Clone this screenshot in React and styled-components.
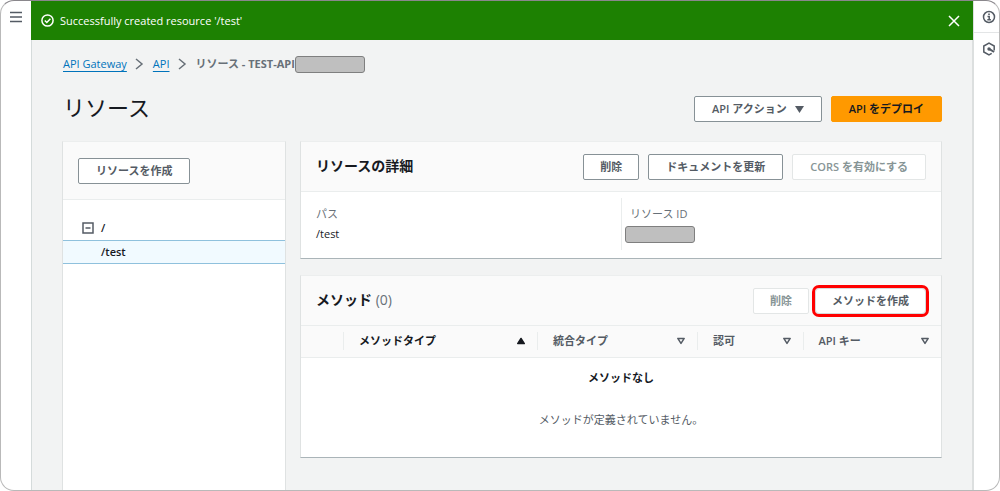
import styled, { createGlobalStyle } from "styled-components";

const GlobalStyle = createGlobalStyle`
  * {
    box-sizing: border-box;
  }

  body {
    margin: 0;
    background: #ffffff;
    color: #16191f;
    font-family: "Open Sans", "Noto Sans CJK JP", sans-serif;
    font-size: 11px;
    line-height: 20px;
  }

  h1, h2, p, ul, ol, dl, dd {
    margin: 0;
    padding: 0;
  }

  ul, ol {
    list-style: none;
  }

  svg {
    display: block;
    flex: none;
  }
`;

const Frame = styled.div`
  display: flex;
  min-height: 100vh;
  border: 1px solid #b9b9b9;
  border-top-color: #8a878c;
  border-radius: 14px;
  overflow: hidden;
`;

const Rail = styled.nav`
  display: flex;
  flex-direction: column;
  flex: none;
  width: ${(props) => props.$width};
`;

const RailButton = styled.button`
  display: flex;
  align-items: center;
  justify-content: center;
  height: 32px;
  padding: 0 0 0 ${(props) => props.$inset || "0"};
  border: 0;
  border-bottom: 1px solid ${(props) => (props.$line ? "#e3e5e6" : "transparent")};
  background: none;
  color: #545b64;
`;

const Main = styled.main`
  display: flex;
  flex-direction: column;
  flex: 1;
  min-width: 0;
  background: #f2f3f3;
  border-left: 1px solid #d5dbdb;
  border-right: 2px solid #dcdfdf;
`;

const Banner = styled.div`
  display: flex;
  align-items: center;
  gap: 6px;
  height: 39px;
  margin: 0 -1px;
  padding: 0 13px 0 10px;
  background: #1d8102;
  color: #ffffff;
  font-weight: 500;
`;

const BannerText = styled.p`
  flex: 1;
`;

const PlainButton = styled.button`
  display: flex;
  padding: 0;
  border: 0;
  background: none;
  color: inherit;
`;

const Content = styled.div`
  display: flex;
  flex-direction: column;
  flex: 1;
  padding: 14px 30px 0;
`;

const Breadcrumbs = styled.ol`
  display: flex;
  align-items: center;
  height: 20px;
  padding-left: 1px;
`;

const Crumb = styled.li`
  display: flex;
  align-items: center;
  color: #687078;
  font-weight: ${(props) => (props.$current ? 700 : 400)};
`;

const CrumbLink = styled.a`
  color: #0073bb;
  text-decoration: underline;
  text-underline-offset: 3px;
`;

const CrumbArrow = styled.svg`
  margin: 0 8px;
`;

const Redacted = styled.span`
  display: block;
  width: 70px;
  height: 17px;
  border: 1px solid #7f7f7f;
  border-radius: 3px;
  background: #bfbfbf;
`;

const TitleRow = styled.div`
  display: flex;
  align-items: center;
  justify-content: space-between;
  margin: 19px 0 16px;
  height: 32px;
`;

const Title = styled.h1`
  padding: 0 0 4px 1px;
  font-size: 22px;
  font-weight: 400;
  line-height: 28px;
`;

const Actions = styled.div`
  display: flex;
  gap: ${(props) => props.$gap || "9px"};
`;

const Button = styled.button`
  display: flex;
  align-items: center;
  gap: 8px;
  height: 26px;
  padding: 0 ${(props) => (props.$compact ? "16px" : "17px")};
  border: 1px solid #879196;
  border-radius: 2px;
  background: #ffffff;
  color: #545b64;
  font-family: inherit;
  font-size: 11px;
  font-weight: 600;
  line-height: 20px;
  white-space: nowrap;

  &:disabled {
    border-color: #e3e6e6;
    color: #879596;
  }
`;

const PrimaryButton = styled(Button)`
  border-color: #ff9900;
  background: #ff9900;
  color: #16191f;
`;

const MarkedButton = styled(Button)`
  outline: 3px solid #ff0000;
  border-radius: 4px;
  border-color: #d5dbdb;
`;

const Columns = styled.div`
  display: grid;
  grid-template-columns: 224px minmax(0, 1fr);
  gap: 14px;
  flex: 1;
`;

const Stack = styled.div`
  display: flex;
  flex-direction: column;
  gap: 16px;
`;

const Panel = styled.section`
  background: #ffffff;
  border: 1px solid #dfe2e2;
  border-top-color: #eceeee;
  border-bottom: ${(props) => (props.$open ? "0" : "1px solid #aab4b8")};
`;

const PanelHeader = styled.header`
  display: flex;
  align-items: center;
  justify-content: space-between;
  height: ${(props) => (props.$tall ? "58px" : "50px")};
  padding: 0 15px;
  background: #fafafa;
  border-bottom: 1px solid #eaeded;
`;

const PanelTitle = styled.h2`
  padding-bottom: 2px;
  font-size: 14px;
  font-weight: 700;
  line-height: 20px;
`;

const Counter = styled.span`
  color: #687078;
  font-weight: 400;
`;

const Tree = styled.ul`
  padding-top: 16px;
`;

const TreeItem = styled.li`
  display: grid;
  grid-template-columns: 12px 1fr;
  align-items: center;
  gap: 7px;
  height: 24px;
  padding-left: 19px;
  font-weight: 600;
  background: ${(props) => (props.$selected ? "#f1faff" : "none")};
  border: solid ${(props) => (props.$selected ? "#8fc1dd" : "transparent")};
  border-width: 1px 0;
`;

const TreeLabel = styled.span`
  grid-column: 2;
`;

const Details = styled.dl`
  display: grid;
  grid-template-columns: 1fr 1fr;
  padding: 6px 15px 8px;
`;

const Field = styled.div`
  padding: 6px 0 6px ${(props) => (props.$divided ? "3px" : "0")};
  border-left: ${(props) => (props.$divided ? "1px solid #eaeded" : "0")};
`;

const FieldLabel = styled.dt`
  padding-left: ${(props) => (props.$indent ? "5px" : "0")};
  color: #687078;
`;

const FieldValue = styled.dd`
  display: flex;
  align-items: center;
  height: 20px;
`;

const Table = styled.table`
  width: 100%;
  table-layout: fixed;
  border-collapse: collapse;
`;

const HeadCell = styled.th`
  width: ${(props) => props.$width || "auto"};
  height: 31px;
  padding: 6px 0;
  background: #fafafa;
  border-bottom: 1px solid #eaeded;
  color: ${(props) => (props.$active ? "#16191f" : "#545b64")};
  font-weight: 600;
  text-align: left;
`;

const HeadInner = styled.div`
  display: flex;
  align-items: center;
  justify-content: space-between;
  height: 18px;
  padding: 0 11px 0 15px;
  border-left: 1px solid #eaeded;
`;

const EmptyCell = styled.td`
  height: 100px;
  padding: 0 0 16px;
  text-align: center;
  color: #545b64;
`;

const EmptyTitle = styled.p`
  margin-bottom: 22px;
  color: #16191f;
  font-weight: 600;
`;

const columns = [
  { label: "メソッドタイプ", width: "30.3%", active: true },
  { label: "統合タイプ", width: "25%" },
  { label: "認可", width: "16.5%" },
  { label: "API キー" },
];

function MenuIcon() {
  return (
    <svg width="12" height="12" viewBox="0 0 12 12" stroke="currentColor" strokeWidth="1.5">
      <path d="M0 1.5h12M0 6h12M0 10.5h12" />
    </svg>
  );
}

function InfoIcon() {
  return (
    <svg width="14" height="14" viewBox="0 0 14 14" fill="none" stroke="currentColor" strokeWidth="1.5">
      <circle cx="7" cy="7" r="5.5" />
      <path d="M5.5 6.5h1.7v3M5.3 9.8h3.6M6.2 4.2h1.6" />
    </svg>
  );
}

function HexIcon() {
  return (
    <svg width="14" height="14" viewBox="0 0 14 14" fill="none" stroke="currentColor" strokeWidth="1.5">
      <path d="M12.2 8.5V4L7 1.1 1.8 4v6L7 12.9l2.7-1.5" />
      <circle cx="7" cy="7" r="1.7" fill="currentColor" stroke="none" />
      <path d="M7.5 7.2l4.6 2.8" strokeWidth="2" />
    </svg>
  );
}

function CheckIcon() {
  return (
    <svg width="13" height="13" viewBox="0 0 13 13" fill="none" stroke="currentColor" strokeWidth="1.5">
      <circle cx="6.5" cy="6.5" r="5.6" />
      <path d="M3.8 6.5l2 2 3.6-3.7" />
    </svg>
  );
}

function CloseIcon() {
  return (
    <svg width="12" height="12" viewBox="0 0 12 12" stroke="currentColor" strokeWidth="1.5">
      <path d="M1 1l10 10M11 1L1 11" />
    </svg>
  );
}

function ArrowIcon() {
  return (
    <CrumbArrow width="10" height="12" viewBox="0 0 10 12" fill="none" stroke="#687078" strokeWidth="1.5">
      <path d="M1 1l6 5-6 5" />
    </CrumbArrow>
  );
}

function SortIcon({ active }) {
  return (
    <svg width="10" height="8" viewBox="0 0 10 8" stroke="currentColor" strokeWidth="1.5" strokeLinejoin="round">
      {active ? (
        <path d="M1.7 6.6L5 1.5l3.3 5.1z" fill="currentColor" />
      ) : (
        <path d="M1.8 1.4h6.4L5 6.4z" fill="none" />
      )}
    </svg>
  );
}

function CollapseIcon() {
  return (
    <svg width="12" height="12" viewBox="0 0 12 12" fill="none" stroke="#545b64" strokeWidth="1.5">
      <path d="M1 1h10v10H1zM3.5 6h5" />
    </svg>
  );
}

function App() {
  return (
    <>
      <GlobalStyle />
      <Frame>
        <Rail $width="30px">
          <RailButton aria-label="メニュー">
            <MenuIcon />
          </RailButton>
        </Rail>
        <Main>
          <Banner role="status">
            <CheckIcon />
            <BannerText>Successfully created resource '/test'</BannerText>
            <PlainButton aria-label="閉じる">
              <CloseIcon />
            </PlainButton>
          </Banner>
          <Content>
            <Breadcrumbs>
              <Crumb>
                <CrumbLink href="#apis">API Gateway</CrumbLink>
                <ArrowIcon />
              </Crumb>
              <Crumb>
                <CrumbLink href="#api">API</CrumbLink>
                <ArrowIcon />
              </Crumb>
              <Crumb $current>
                リソース - TEST-API
                <Redacted />
              </Crumb>
            </Breadcrumbs>
            <TitleRow>
              <Title>リソース</Title>
              <Actions>
                <Button>
                  API アクション
                  <svg width="9" height="7" viewBox="0 0 9 7" fill="currentColor">
                    <path d="M0 0h9L4.5 7z" />
                  </svg>
                </Button>
                <PrimaryButton>API をデプロイ</PrimaryButton>
              </Actions>
            </TitleRow>
            <Columns>
              <Panel $open>
                <PanelHeader $tall>
                  <Button>リソースを作成</Button>
                </PanelHeader>
                <Tree>
                  <TreeItem>
                    <PlainButton aria-label="折りたたむ">
                      <CollapseIcon />
                    </PlainButton>
                    <TreeLabel>/</TreeLabel>
                  </TreeItem>
                  <TreeItem $selected>
                    <TreeLabel>/test</TreeLabel>
                  </TreeItem>
                </Tree>
              </Panel>
              <Stack>
                <Panel>
                  <PanelHeader>
                    <PanelTitle>リソースの詳細</PanelTitle>
                    <Actions>
                      <Button $compact>削除</Button>
                      <Button>ドキュメントを更新</Button>
                      <Button disabled>CORS を有効にする</Button>
                    </Actions>
                  </PanelHeader>
                  <Details>
                    <Field>
                      <FieldLabel>パス</FieldLabel>
                      <FieldValue>/test</FieldValue>
                    </Field>
                    <Field $divided>
                      <FieldLabel $indent>リソース ID</FieldLabel>
                      <FieldValue>
                        <Redacted />
                      </FieldValue>
                    </Field>
                  </Details>
                </Panel>
                <Panel>
                  <PanelHeader>
                    <PanelTitle>
                      メソッド <Counter>(0)</Counter>
                    </PanelTitle>
                    <Actions $gap="6px">
                      <Button $compact disabled>
                        削除
                      </Button>
                      <MarkedButton $compact>メソッドを作成</MarkedButton>
                    </Actions>
                  </PanelHeader>
                  <Table>
                    <thead>
                      <tr>
                        <HeadCell $width="42px" />
                        {columns.map((column) => (
                          <HeadCell key={column.label} $width={column.width} $active={column.active}>
                            <HeadInner>
                              {column.label}
                              <SortIcon active={column.active} />
                            </HeadInner>
                          </HeadCell>
                        ))}
                      </tr>
                    </thead>
                    <tbody>
                      <tr>
                        <EmptyCell colSpan={5}>
                          <EmptyTitle>メソッドなし</EmptyTitle>
                          <p>メソッドが定義されていません。</p>
                        </EmptyCell>
                      </tr>
                    </tbody>
                  </Table>
                </Panel>
              </Stack>
            </Columns>
          </Content>
        </Main>
        <Rail $width="25px">
          <RailButton $line $inset="5px" aria-label="情報">
            <InfoIcon />
          </RailButton>
          <RailButton $inset="5px" aria-label="ツール">
            <HexIcon />
          </RailButton>
        </Rail>
      </Frame>
    </>
  );
}

export default App;
